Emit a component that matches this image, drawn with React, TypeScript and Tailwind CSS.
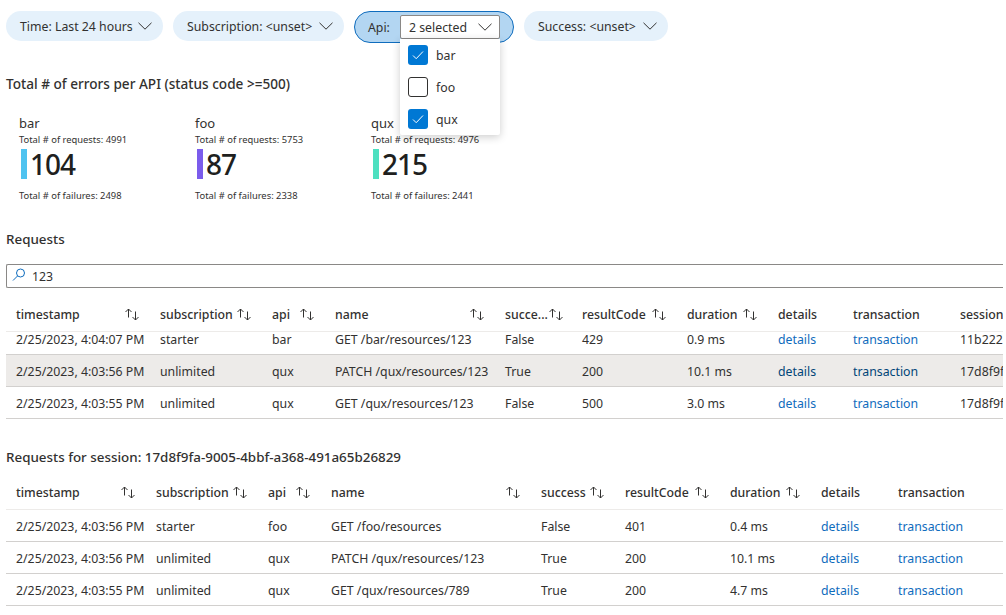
const Chevron = () => (
    <svg width="14" height="8" viewBox="0 0 14 8" fill="none" stroke="#323130" strokeWidth="1" className="shrink-0">
        <path d="M0.5 0.8L7 7.2L13.5 0.8" />
    </svg>
);

const SortIcon = () => (
    <svg width="17" height="13" viewBox="0 0 17 13" fill="none" stroke="currentColor" strokeWidth="1" className="shrink-0 text-[#323130]">
        <path d="M4.5 9.5V1M1.5 4l3-3 3 3" />
        <path d="M11.5 3.5V12M8.5 9l3 3 3-3" />
    </svg>
);

const SearchIcon = () => (
    <svg width="14" height="14" viewBox="0 0 14 14" fill="none" stroke="#0f6cbd" strokeWidth="1" className="-mt-[2px]">
        <circle cx="8.5" cy="5" r="4" />
        <path d="M5.5 8L1 12.5" />
    </svg>
);

const CheckBox = ({ checked }: { checked: boolean }) => (
    <div className={`size-5 rounded-[3px] flex items-center justify-center ${checked ? 'bg-[#0078d4]' : 'border border-[#323130] bg-white'}`}>
        {checked && (
            <svg width="12" height="10" viewBox="0 0 12 10" fill="none" stroke="white" strokeWidth="1">
                <path d="M1 5.5l3.2 3.2L11 1.5" />
            </svg>
        )}
    </div>
);

const Pill = ({ label, value, className }: { label: string; value: string; className: string }) => (
    <div className={`h-[30px] rounded-full bg-[#e5f1fb] flex items-center justify-between pl-[14px] pr-[11px] ${className}`}>
        <span className="whitespace-nowrap pt-[1px]">{label} <span>{value}</span></span>
        <Chevron />
    </div>
);

const StatTile = ({ name, requests, count, failures, color }: { name: string; requests: number; count: number; failures: number; color: string }) => (
    <div className="w-[176px]">
        <div className="text-[13px] leading-[16px] h-[18px]">{name}</div>
        <div className="text-[9.4px] leading-[13px] whitespace-nowrap">Total # of requests: {requests}</div>
        <div className="flex items-center mt-[3px] ml-[2px] h-[30px]">
            <div className={`w-[6px] h-[30px] ${color}`} />
            <div className="ml-[3px] text-[28px] font-medium text-[#201f1e] leading-[30px] tracking-[-1px]">{count}</div>
        </div>
        <div className="text-[9.4px] leading-[14px] mt-[10px] whitespace-nowrap">Total # of failures: {failures}</div>
    </div>
);

const requestColumns = 'grid-cols-[144px_112px_63px_170px_77px_105px_91px_75px_107px_60px]';
const sessionColumns = 'grid-cols-[140px_112px_63px_210px_84px_105px_91px_77px_107px]';

type Row = { ts: string; sub: string; api: string; name: string; ok: string; code: string; dur: string; session?: string; selected?: boolean };

const headers = [
    { label: 'timestamp', sort: true },
    { label: 'subscription', sort: true },
    { label: 'api', sort: true },
    { label: 'name', sort: true },
    { label: 'success', sort: true },
    { label: 'resultCode', sort: true },
    { label: 'duration', sort: true },
    { label: 'details', sort: false },
    { label: 'transaction', sort: false },
];

const HeaderRow = ({ columns, className, shortSuccess, withSession }: { columns: string; className: string; shortSuccess?: boolean; withSession?: boolean }) => (
    <div className={`grid ${columns} pl-[10px] items-center font-medium border-b border-[#edebe9] ${className}`}>
        {headers.map((h) => (
            <div key={h.label} className="flex items-center justify-between pr-[19px] whitespace-nowrap">
                <span>{h.label === 'success' && shortSuccess ? 'succe...' : h.label}</span>
                {h.sort && <SortIcon />}
            </div>
        ))}
        {withSession && <div className="whitespace-nowrap">session</div>}
    </div>
);

const DataRow = ({ row, columns }: { row: Row; columns: string }) => {
    const link = row.selected ? 'text-[#004578]' : 'text-[#0f6cbd]';
    return (
        <div className={`grid ${columns} pl-[10px] pt-[2px] h-[32px] items-center border-b border-[#d2d0ce] whitespace-nowrap ${row.selected ? 'bg-[#edebe9]' : ''}`}>
            <div>{row.ts}</div>
            <div>{row.sub}</div>
            <div>{row.api}</div>
            <div>{row.name}</div>
            <div>{row.ok}</div>
            <div>{row.code}</div>
            <div>{row.dur}</div>
            <div className={link}>details</div>
            <div className={link}>transaction</div>
            {row.session && <div>{row.session}</div>}
        </div>
    );
};

const requestRows: Row[] = [
    { ts: '2/25/2023, 4:04:07 PM', sub: 'starter', api: 'bar', name: 'GET /bar/resources/123', ok: 'False', code: '429', dur: '0.9 ms', session: '11b222' },
    { ts: '2/25/2023, 4:03:56 PM', sub: 'unlimited', api: 'qux', name: 'PATCH /qux/resources/123', ok: 'True', code: '200', dur: '10.1 ms', session: '17d8f9f', selected: true },
    { ts: '2/25/2023, 4:03:55 PM', sub: 'unlimited', api: 'qux', name: 'GET /qux/resources/123', ok: 'False', code: '500', dur: '3.0 ms', session: '17d8f9f' },
];

const sessionRows: Row[] = [
    { ts: '2/25/2023, 4:03:56 PM', sub: 'starter', api: 'foo', name: 'GET /foo/resources', ok: 'False', code: '401', dur: '0.4 ms' },
    { ts: '2/25/2023, 4:03:56 PM', sub: 'unlimited', api: 'qux', name: 'PATCH /qux/resources/123', ok: 'True', code: '200', dur: '10.1 ms' },
    { ts: '2/25/2023, 4:03:55 PM', sub: 'unlimited', api: 'qux', name: 'GET /qux/resources/789', ok: 'True', code: '200', dur: '4.7 ms' },
];

export default function App() {
    return (
        <div className="w-[1006px] h-[615px] overflow-hidden bg-white text-[#323130] text-[12.3px] leading-[18px] font-['Noto_Sans',sans-serif]">
            <div className="w-[1003px] pl-[6px] overflow-hidden">
                {/* Filters */}
                <div className="flex gap-[10px] pt-[11px] items-start h-[43px]">
                    <Pill label="Time:" value="Last 24 hours" className="w-[157px]" />
                    <Pill label="Subscription:" value="<unset>" className="w-[171px]" />
                    <div className="relative w-[160px] h-[32px] rounded-full bg-[#b3d6f2] border border-[#0f6cbd] flex items-center pl-[13px]">
                        <span className="pt-[1px]">Api:</span>
                        <div className="absolute left-[45px] top-[3px] w-[100px] h-[24px] bg-white border border-[#8a8886] rounded-[2px] flex items-center justify-between pl-[8px] pr-[7px]">
                            <span className="pt-[1px]">2 selected</span>
                            <Chevron />
                        </div>
                        <div className="absolute z-10 left-[45px] top-[27px] w-[100px] h-[96px] bg-white rounded-b-[2px] shadow-[0_2px_8px_rgba(0,0,0,0.2)]">
                            {[['bar', true], ['foo', false], ['qux', true]].map(([name, on]) => (
                                <div key={name as string} className="h-[32px] flex items-center pl-[8px] gap-2">
                                    <CheckBox checked={on as boolean} />
                                    <span className="pt-[1px]">{name as string}</span>
                                </div>
                            ))}
                        </div>
                    </div>
                    <Pill label="Success:" value="<unset>" className="w-[144px]" />
                </div>

                {/* Error totals */}
                <h2 className="mt-[32px] font-medium text-[13.6px] leading-[18px]">Total # of errors per API (status code &gt;=500)</h2>
                <div className="flex mt-[22px] pl-[13px]">
                    <StatTile name="bar" requests={4991} count={104} failures={2498} color="bg-[#4fc3f0]" />
                    <StatTile name="foo" requests={5753} count={87} failures={2338} color="bg-[#7b5cec]" />
                    <StatTile name="qux" requests={4976} count={215} failures={2441} color="bg-[#4de0c0]" />
                </div>

                {/* Requests */}
                <h2 className="mt-[27px] font-medium text-[13.4px] leading-[18px]">Requests</h2>
                <div className="mt-[16px] h-[24px] border border-r-0 border-[#8a8886] rounded-l-[2px] flex items-center pl-[5px] gap-[6px]">
                    <SearchIcon />
                    <span className="pt-[1px]">123</span>
                </div>
                <div className="mt-[11px] w-[1100px]">
                    <HeaderRow columns={requestColumns} className="h-[33px] pb-[1px]" shortSuccess withSession />
                    <div className="h-[87px] overflow-hidden">
                        <div className="-mt-[9px]">
                            {requestRows.map((r) => (
                                <DataRow key={r.ts} row={r} columns={requestColumns} />
                            ))}
                        </div>
                    </div>
                </div>

                {/* Session requests */}
                <h2 className="mt-[29px] font-medium text-[13.4px] leading-[18px] whitespace-nowrap">Requests for session: 17d8f9fa-9005-4bbf-a368-491a65b26829</h2>
                <div className="mt-[10px]">
                    <HeaderRow columns={sessionColumns} className="h-[34px]" />
                    {sessionRows.map((r) => (
                        <DataRow key={r.ts + r.name} row={r} columns={sessionColumns} />
                    ))}
                </div>
            </div>
        </div>
    );
}
